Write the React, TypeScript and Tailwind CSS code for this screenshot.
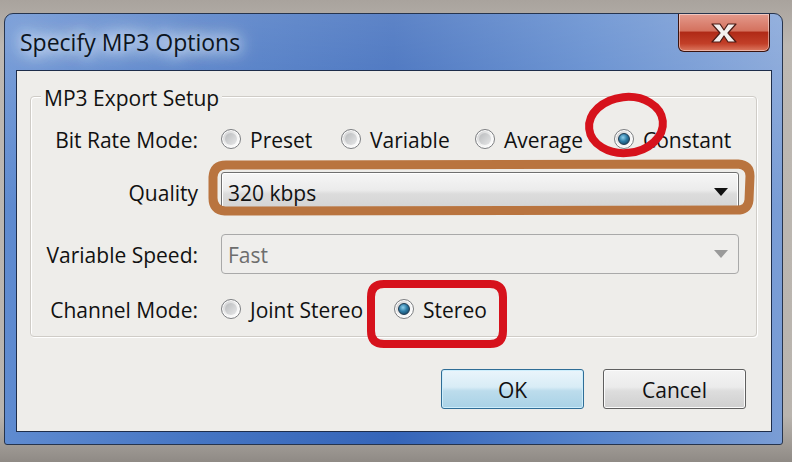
import { JSX } from "react";

const font = "font-['Open_Sans','Noto_Sans',sans-serif]";

interface RadioProps {
  label: string;
  checked?: boolean;
  width?: string;
}

const Radio = ({ label, checked = false, width = "" }: RadioProps): JSX.Element => (
  <div className={`flex items-center gap-[9px] ${width}`}>
    <div className="flex h-[20px] w-[20px] items-center justify-center rounded-full border border-[#7d7f82] bg-[linear-gradient(135deg,#c9cacb,#f4f4f4_60%,#ffffff)] shadow-[inset_0_0_0_1px_#ffffff]">
      {checked ? (
        <div className="h-[12px] w-[12px] rounded-full border border-[#1d3a52] bg-[radial-gradient(circle_at_40%_35%,#8fd0ec,#2d7ca6_45%,#12354f)]" />
      ) : (
        <div className="h-[12px] w-[12px] rounded-full bg-[linear-gradient(135deg,#b9bbbd,#e6e7e8)]" />
      )}
    </div>
    <span className="mt-[2px] text-[21px] leading-none text-[#111]">{label}</span>
  </div>
);

const Label = ({ children }: { children: string }): JSX.Element => (
  <div className="mt-[2px] w-[167px] shrink-0 text-right text-[21px] leading-none text-[#111]">
    {children}
  </div>
);

const Annotations = (): JSX.Element => (
  <svg
    className="pointer-events-none absolute top-0 left-0"
    width="792"
    height="462"
    viewBox="0 0 792 462"
  >
    <ellipse
      cx="626"
      cy="125"
      rx="37"
      ry="28"
      transform="rotate(-6 626 125)"
      fill="none"
      stroke="#d6121c"
      strokeWidth="8"
    />
    <path
      d="M226 165 L738 164 Q750 165 750 176 L749 200 Q748 211 735 210 L225 211 Q213 210 213 198 L213 177 Q214 165 226 165 Z"
      fill="none"
      stroke="#b9743f"
      strokeWidth="9"
    />
    <path
      d="M384 284 L490 284 Q503 284 503 297 L503 331 Q503 344 490 344 L384 344 Q371 344 371 331 L371 297 Q371 284 384 284 Z"
      fill="none"
      stroke="#d6121c"
      strokeWidth="8"
    />
  </svg>
);

const App = (): JSX.Element => (
  <div className={`relative h-[462px] w-[792px] overflow-hidden bg-[linear-gradient(180deg,#a9a39d,#bdb8b2_10%,#b9b4ae_90%,#8f8a85)] pt-[13px] pl-[4px] ${font}`}>
    <div className="flex h-[432px] w-[779px] flex-col rounded-t-[9px] rounded-b-[3px] border border-[#26344d] bg-[linear-gradient(180deg,rgba(255,255,255,0.2),rgba(255,255,255,0)_45%),linear-gradient(90deg,#5f8bd0_0%,#4575c3_25%,#3565b9_50%,#5583cb_75%,#7a9dd5_100%)]">
      <div className="flex h-[56px] items-start justify-between">
        <div className="pt-[12px] pl-[15px] text-[23px] leading-[32px] text-[#0c1420] [text-shadow:0_0_12px_#e8f0fb,0_0_18px_#e8f0fb,0_0_24px_#dde8f8]">
          Specify MP3 Options
        </div>
        <div className="mr-[12px] flex h-[38px] w-[92px] items-center justify-center rounded-b-[6px] border border-t-0 border-[#3a1410] bg-[linear-gradient(180deg,#e49a8c_0%,#d4725f_45%,#b02a17_50%,#c23f28_80%,#dc7a62_100%)] shadow-[inset_0_0_0_1px_rgba(255,255,255,0.45)]">
          <svg width="30" height="20" viewBox="0 0 30 20">
            <path
              d="M3 1 H11 L15 7 L19 1 H27 L19 10 L27 19 H19 L15 13 L11 19 H3 L11 10 Z"
              fill="#f4f0ee"
              stroke="#4a1a14"
              strokeWidth="1.2"
              strokeLinejoin="round"
            />
          </svg>
        </div>
      </div>

      <div className="ml-[11px] mr-[10px] h-[362px] border border-[#1e2d4a] bg-[#eeedea]">
        <div className="relative mt-[25px] ml-[13px] h-[241px] w-[727px] rounded-[4px] border border-[#cfccc7] shadow-[inset_1px_1px_0_#ffffff,1px_1px_0_#ffffff]">
          <div className="absolute top-[-12px] left-[10px] bg-[#eeedea] px-[3px] pt-[2px] text-[21px] leading-[22px] text-[#111]">
            MP3 Export Setup
          </div>

          <div className="flex flex-col pt-[22px]">
            <div className="flex h-[40px] items-center gap-[23px]">
              <Label>Bit Rate Mode:</Label>
              <div className="flex items-center">
                <Radio label="Preset" width="w-[120px]" />
                <Radio label="Variable" width="w-[134px]" />
                <Radio label="Average" width="w-[139px]" />
                <Radio label="Constant" checked />
              </div>
            </div>

            <div className="mt-[13px] flex h-[40px] items-center gap-[23px]">
              <Label>Quality</Label>
              <div className="flex h-[40px] w-[518px] items-center justify-between rounded-[3px] border border-[#6f6f6f] bg-[linear-gradient(180deg,#f6f6f6_0%,#ebebeb_45%,#dcdcdc_55%,#d2d2d2_100%)] pr-[10px] pl-[6px] shadow-[inset_0_0_0_1px_#ffffff]">
                <span className="mt-[2px] text-[21px] leading-none text-[#111]">320 kbps</span>
                <svg width="14" height="8" viewBox="0 0 14 8">
                  <path d="M0 0 H14 L7 8 Z" fill="#111" />
                </svg>
              </div>
            </div>

            <div className="mt-[22px] flex h-[40px] items-center gap-[23px]">
              <Label>Variable Speed:</Label>
              <div className="flex h-[40px] w-[518px] items-center justify-between rounded-[4px] border border-[#a9a9a9] bg-[#efeeec] pr-[10px] pl-[6px]">
                <span className="mt-[2px] text-[21px] leading-none text-[#6d6d6d]">Fast</span>
                <svg width="14" height="8" viewBox="0 0 14 8">
                  <path d="M0 0 H14 L7 8 Z" fill="#9a9a9a" />
                </svg>
              </div>
            </div>

            <div className="mt-[15px] flex h-[40px] items-center gap-[23px]">
              <Label>Channel Mode:</Label>
              <div className="flex items-center">
                <Radio label="Joint Stereo" width="w-[173px]" />
                <Radio label="Stereo" checked />
              </div>
            </div>
          </div>
        </div>

        <div className="mt-[32px] flex justify-end gap-[19px] pr-[25px]">
          <button className="flex h-[40px] w-[143px] items-center justify-center rounded-[3px] border border-[#2f6d96] bg-[linear-gradient(180deg,#eaf5fb_0%,#d8ecf6_45%,#bcdcec_55%,#a9d2e6_100%)] pt-[2px] text-[21px] leading-none text-[#111] shadow-[inset_0_0_0_1px_#cdeefc]">
            OK
          </button>
          <button className="flex h-[40px] w-[143px] items-center justify-center rounded-[3px] border border-[#5f5f5f] bg-[linear-gradient(180deg,#f4f4f4_0%,#ebebeb_45%,#dddddd_55%,#cfcfcf_100%)] pt-[2px] text-[21px] leading-none text-[#111] shadow-[inset_0_0_0_1px_#fbfbfb]">
            Cancel
          </button>
        </div>
      </div>
    </div>
    <Annotations />
  </div>
);

export default App;
